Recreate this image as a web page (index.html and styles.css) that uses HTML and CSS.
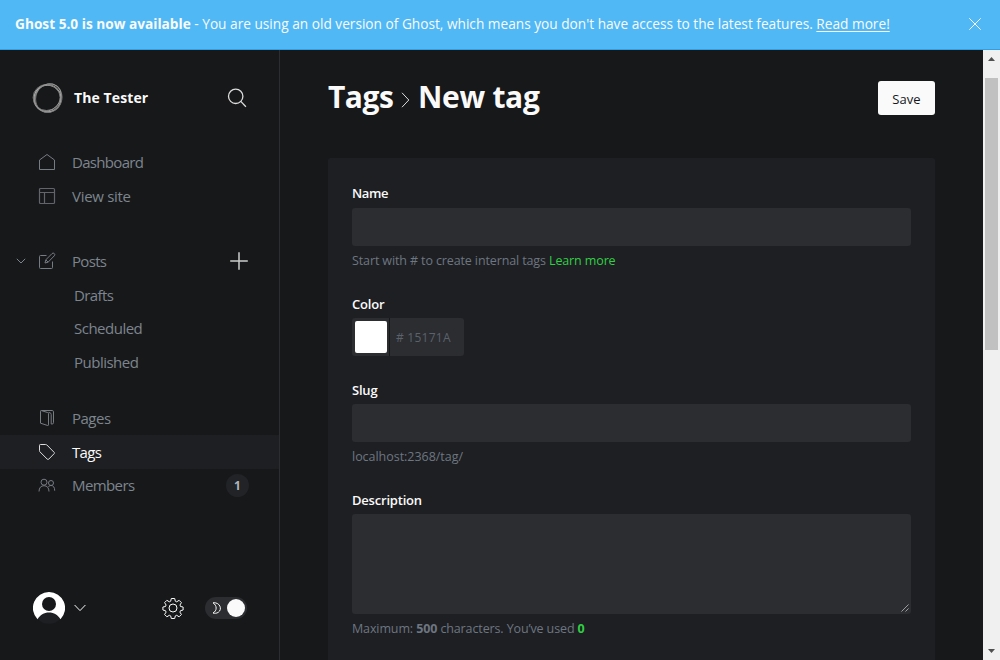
FILE: index.html
```
<!DOCTYPE html>
<html lang="en">
<head>
<meta charset="utf-8">
<title>Tags - New tag</title>
<link rel="stylesheet" href="styles.css">
</head>
<body>
<div class="app">
  <header class="banner">
    <p class="banner-text"><strong>Ghost 5.0 is now available</strong><span> - You are using an old version of Ghost, which means you don't have access to the latest features. <a href="#">Read more!</a></span></p>
    <svg class="banner-close" viewBox="0 0 12 12"><path d="M.3.3l11.4 11.4M11.7.3L.3 11.7"/></svg>
  </header>
  <div class="body">
    <aside class="sidebar">
      <div class="site">
        <svg class="site-logo" viewBox="0 0 32 32"><circle cx="15.500" cy="16.500" r="13.500" stroke="#aaa" stroke-width="1.400"/><ellipse cx="14.600" cy="15.500" rx="13.500" ry="13" stroke="#777"/><ellipse cx="16.800" cy="15.800" rx="13" ry="14.500" stroke="#777" transform="rotate(20 16 16)"/><ellipse cx="16.300" cy="15.600" rx="14.600" ry="12.400" stroke="#999" stroke-width=".9" transform="rotate(-50 16 16)"/></svg>
        <span class="site-name">The Tester</span>
        <svg class="search" viewBox="0 0 20 20"><circle cx="8.700" cy="8.300" r="7.200"/><path d="M13.800 13.400l5.100 5.300"/></svg>
      </div>
      <nav class="nav">
        <ul class="group">
          <li class="row"><svg class="icon" viewBox="0 0 18 18"><path d="M1.500 16.500v-9.500L9 1.500l7.500 5.500v9.500z"/></svg><span class="l-dash">Dashboard</span></li>
          <li class="row"><svg class="icon boxy" viewBox="0 0 18 18"><rect x="1.500" y="1.500" width="15" height="15" rx="1"/><path d="M1.500 5.500h15M6.500 5.500v11"/></svg><span class="l-view">View site</span></li>
        </ul>
        <ul class="group posts">
          <li class="row"><svg class="chev" viewBox="0 0 10 6"><path d="M.8.800L5 5 9.200.800"/></svg><svg class="icon" viewBox="0 0 18 18"><path d="M8.500 3.500h-6a1 1 0 0 0-1 1v11a1 1 0 0 0 1 1h11a1 1 0 0 0 1-1v-6"/><path d="M7 11l.8-3.200L14 1.600a1.500 1.500 0 0 1 2.300 2.200L10.100 10.200 7 11zM7.800 7.800l2.300 2.400"/></svg><span class="l-posts">Posts</span><svg class="plus" viewBox="0 0 18 18"><path d="M9 .2v17.600M.2 9h17.600"/></svg></li>
          <li class="row sub"><span class="l-drafts">Drafts</span></li>
          <li class="row sub"><span class="l-sched">Scheduled</span></li>
          <li class="row sub"><span class="l-publ">Published</span></li>
        </ul>
        <ul class="group">
          <li class="row"><svg class="icon" viewBox="0 0 18 18"><path d="M2.500 2.200v12l7.200 2.300c.5.100.8-.1.800-.6V4.600c0-.6-.3-1-.9-1.100L3.300 1.600c-.5-.1-.8.100-.8.600zM3.500 1.500h10.700c.8 0 1.300.5 1.300 1.300v10.900c0 .8-.5 1.300-1.300 1.300h-1V5.500c0-1-.4-1.500-1.200-1.700l-1.500-.4"/></svg><span class="l-pages">Pages</span></li>
          <li class="row active"><svg class="icon" viewBox="0 0 18 18"><path d="M1.500 2.300c0-.5.300-.8.800-.8h5.400c.5 0 .8.100 1.200.5l7.200 7.300c.5.500.5.900 0 1.400l-5.400 5.500c-.5.500-.9.500-1.400 0L2 8.900c-.4-.4-.5-.7-.5-1.200z"/></svg><span class="l-tags">Tags</span></li>
          <li class="row"><svg class="icon" viewBox="0 0 18 18"><circle cx="6" cy="6.200" r="3"/><path d="M1 15.500c0-3.700 2-5.800 5-5.800s5 2.100 5 5.800"/><circle cx="13" cy="7" r="2.500"/><path d="M10.200 11c.8-1 1.800-1.500 2.900-1.500 2.300 0 3.600 1.900 3.600 5.200"/></svg><span class="l-memb">Members</span><b class="count">1</b></li>
        </ul>
      </nav>
      <footer class="user">
        <svg class="avatar" viewBox="0 0 32 32"><circle cx="16" cy="16" r="15.800" fill="#1d1f23"/><path fill="#fff" d="M16 0a16 16 0 0 0-11.500 27.200C7 23 11 20.500 16 20.500s9 2.500 11.500 6.700A16 16 0 0 0 16 0z"/><circle cx="16" cy="12" r="7" fill="#17181a"/></svg>
        <svg class="user-chev" viewBox="0 0 12 8"><path d="M.6 1L6 6.600 11.400 1"/></svg>
        <svg class="gear" viewBox="0 0 22 22"><circle cx="11" cy="11" r="4"/><path d="M9.300 1.500h3.400l.6 2.700 1.400.6 2.400-1.500 2.300 2.300-1.400 2.400.5 1.500 2.600.5v3l-2.600.7-.6 1.400 1.500 2.400-2.300 2.300-2.400-1.500-1.400.6-.6 2.600H9.300l-.6-2.600-1.400-.6-2.400 1.500-2.300-2.300 1.500-2.400-.6-1.400-2.600-.7v-3l2.600-.5.600-1.500-1.500-2.400 2.300-2.300 2.400 1.500 1.400-.6z" stroke-linejoin="round"/></svg>
        <div class="toggle"><svg class="moon" viewBox="0 0 10 12"><path d="M1 .8c6.800-.9 9.800 6.500 5.200 9.600-1.600 1-3.600 1.100-5.200.6C5.200 8.700 5.200 3.600 1 .8z"/></svg><i class="knob"></i></div>
      </footer>
    </aside>
    <main class="main">
      <div class="heading">
        <h1><span class="crumb">Tags</span><svg class="crumb-arrow" viewBox="0 0 9 16"><path d="M1 .8L7.800 8 1 15.200"/></svg><span class="crumb-new">New tag</span></h1>
        <button class="save">Save</button>
      </div>
      <form class="card">
        <label class="label l-name">Name</label>
        <div class="field"></div>
        <p class="hint">Start with # to create internal tags <a>Learn more</a></p>
        <label class="label">Color</label>
        <div class="color"><div class="well"><i class="swatch"></i></div><span class="hex"># 15171A</span></div>
        <label class="label">Slug</label>
        <div class="field"></div>
        <p class="hint h-slug">localhost:2368/tag/</p>
        <label class="label">Description</label>
        <div class="field area"><svg class="grip" viewBox="0 0 9 9"><path d="M.5 8.500l8-8M5 8.500L8.500 5"/></svg></div>
        <p class="hint">Maximum: <b>500</b> characters. You’ve used <b class="used">0</b></p>
      </form>
    </main>
    <div class="scrollbar"><svg class="arrow" viewBox="0 0 7 4"><path d="M0 4h7L3.500 0z"/></svg><i class="thumb"></i><svg class="arrow down" viewBox="0 0 7 4"><path d="M0 0h7L3.500 4z"/></svg></div>
  </div>
</div>
</body>
</html>
```
FILE: styles.css
```
* { box-sizing: border-box; }
body { margin: 0; background: #17181a; color: #fafafa; font: 14px/20px "Open Sans", "Noto Sans", sans-serif; overflow: hidden; }
p, h1, ul { margin: 0; padding: 0; list-style: none; }
svg { fill: none; stroke: currentColor; flex: none; display: block; }
.app { height: 660px; display: flex; flex-direction: column; }
.banner { height: 50px; flex: none; display: flex; align-items: center; justify-content: space-between; padding: 0 19px 1px 15px; background: #50b8f5; border-bottom: 1px solid #2f9fe6; }
.banner-text { font-size: 13.68px; white-space: nowrap; }
.banner-text a { color: inherit; text-decoration: underline; text-underline-offset: 2px; }
.banner-close { width: 12px; height: 12px; }
.body { flex: 1; min-height: 0; display: flex; }
.sidebar { width: 280px; flex: none; border-right: 1px solid #2b2d31; display: flex; flex-direction: column; }
.site { display: flex; align-items: center; height: 32px; margin-top: 32px; padding: 0 32px; }
.site-logo { width: 32px; height: 32px; }
.site-name { margin-left: 10px; font-size: 14px; font-weight: 700; letter-spacing: .1px; }
.search { width: 20px; height: 20px; margin-left: auto; stroke-width: 1.3; color: #ddd; }
.nav { margin-top: 31.5px; color: #7d858e; }
.group { margin-bottom: 32px; }
.group.posts { margin-bottom: 23px; }
.row { height: 33.5px; display: flex; align-items: center; padding: 0 32px 0 38px; font-size: 15px; }
.icon { width: 18px; height: 18px; margin-right: 16px; stroke-width: 1; color: #777b82; }
.boxy { color: #62636b; stroke-width: 1.2; }
.row.sub { padding-left: 74px; }
.row.active { background: #1e1f23; color: #fafafa; }
.row.active .icon { color: #ddd; }
.l-dash, .l-posts, .l-tags { letter-spacing: -.68px; }
.l-view { letter-spacing: -.3px; }
.l-drafts, .l-memb { letter-spacing: -.6px; }
.l-sched, .l-publ, .l-pages { letter-spacing: -.5px; }
.chev { width: 10px; height: 6px; margin: 0 12px 0 -22px; }
.plus { width: 18px; height: 18px; margin-left: auto; margin-right: -1px; color: #ccc; stroke-width: 1.5; }
.count { margin-left: auto; margin-right: -2px; width: 23px; height: 23px; border-radius: 50%; background: #212327; color: #aeb4ba; font-size: 12px; line-height: 24px; text-align: center; }
.user { margin-top: auto; height: 32px; margin-bottom: 36px; padding: 0 32px 0 33px; display: flex; align-items: center; }
.avatar { width: 32px; height: 32px; stroke: none; }
.user-chev { width: 12px; height: 8px; margin-left: 9px; }
.gear { width: 22px; height: 22px; margin-left: auto; }
.toggle { width: 42px; height: 22px; margin-left: 21px; border-radius: 11px; background: #2b2d31; display: flex; align-items: center; justify-content: space-between; padding: 0 2px 0 7px; }
.moon { width: 10px; height: 12px; }
.knob { width: 18px; height: 18px; border-radius: 50%; background: #fafafa; }
.main { flex: 1; min-width: 0; padding: 31px 48px 0; overflow: hidden; }
.heading { height: 34px; display: flex; align-items: center; justify-content: space-between; margin-bottom: 43px; }
h1 { display: flex; align-items: center; font-size: 30px; line-height: 34px; font-weight: 700; margin-top: -2px; }
h1 span { white-space: nowrap; }
.crumb { width: 73px; letter-spacing: -.5px; }
.crumb-new { letter-spacing: -.3px; }
.crumb-arrow { width: 9px; height: 16px; margin-right: 8px; margin-top: 6px; color: #ddd; }
.save { width: 57px; height: 34px; border: 0; padding: 1px 0 0; border-radius: 3px; background: #fafafa; color: #15171a; font: 500 13px/20px "Open Sans", sans-serif; letter-spacing: .1px; }
.card { height: 520px; padding: 25px 24px 0; border-radius: 3px; background: #1e1f23; display: flex; flex-direction: column; }
.label { height: 20px; margin-bottom: 4px; font-size: 13px; font-weight: 600; white-space: nowrap; letter-spacing: -.2px; }
.l-name { margin-bottom: 5px; letter-spacing: -.4px; }
.field { height: 38px; flex: none; border-radius: 3px; background: #2b2d31; }
.area { height: 100px; display: flex; justify-content: flex-end; align-items: flex-end; padding: 0 2px 2px 0; color: #bbb; }
.grip { width: 8px; height: 8px; stroke-width: .9; }
.hint { margin: 5px 0 23px; height: 20px; font-size: 12.5px; color: #6d7681; white-space: nowrap; letter-spacing: -.12px; }
.h-slug { letter-spacing: -.03px; }
.hint a, .hint .used { color: #30cf43; }
.color { width: 112px; height: 38px; margin-bottom: 24px; display: flex; border-radius: 3px; background: #2b2d31; overflow: hidden; }
.well { width: 38px; padding: 3px; border-right: 1px solid #17181a; }
.swatch { display: block; width: 32px; height: 32px; background: #fff; border-radius: 2px; }
.hex { padding: 10px 6px; font-size: 12px; color: #5b626b; white-space: nowrap; letter-spacing: .25px; }
.scrollbar { width: 17px; background: #f0f0f0; display: flex; flex-direction: column; align-items: center; padding: 7px 0; }
.arrow { width: 7px; height: 4px; fill: #505050; stroke: none; }
.thumb { width: 13px; height: 272px; margin-top: 17px; background: #c1c1c1; }
.down { margin-top: auto; }
```
